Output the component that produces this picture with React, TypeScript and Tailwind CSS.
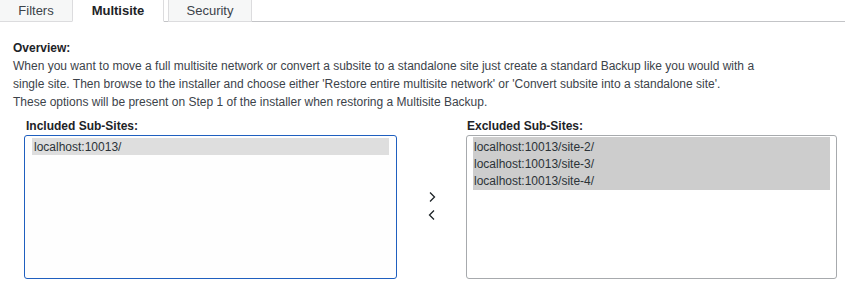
const included = ["localhost:10013/"];
const excluded = ["localhost:10013/site-2/", "localhost:10013/site-3/", "localhost:10013/site-4/"];

function Tab({ label, active, className }: { label: string; active?: boolean; className?: string }) {
  return (
    <div
      className={
        "h-[22px] -mb-px flex items-center justify-center border border-t-0 border-[#dcdcde] text-[13px] " +
        (active ? "bg-white border-b-white font-bold text-[#1d2327]" : "bg-[#f6f7f7] text-[#3c434a]") +
        " " +
        (className ?? "")
      }
    >
      {label}
    </div>
  );
}

export default function App() {
  return (
    <div className="w-[845px] h-[290px] overflow-hidden bg-white font-['Liberation_Sans',Arial,sans-serif] text-[12px] text-[#3c434a]">
      <div className="flex border-b border-[#c3c4c7]">
        <Tab label="Filters" className="w-[74px] -ml-px" />
        <Tab label="Multisite" active className="w-[92px] -ml-px" />
        <Tab label="Security" className="w-[84px] ml-[4px]" />
      </div>

      <div className="px-[13px] pt-[17px] leading-[18px] whitespace-nowrap">
        <div className="font-bold text-[#1d2327]">Overview:</div>
        <p>
          When you want to move a full multisite network or convert a subsite to a standalone site just create a standard Backup like you would with a
          <br />
          single site. Then browse to the installer and choose either 'Restore entire multisite network' or 'Convert subsite into a standalone site'.
          <br />
          These options will be present on Step 1 of the installer when restoring a Multisite Backup.
        </p>
      </div>

      <div className="flex pl-[24px] pt-[7px]">
        <div className="w-[373px]">
          <div className="pl-[2px] font-bold text-[#1d2327] leading-[17px]">Included Sub-Sites:</div>
          <div className="h-[144px] rounded-[3px] border-[1.5px] border-[#1f5fbf] bg-[#fefefe] px-[7px] pt-[2px] text-[#2c3338]">
            {included.map((s) => (
              <div key={s} className="bg-[#dedede] px-[2px] pt-px leading-[16px]">
                {s}
              </div>
            ))}
          </div>
        </div>

        <div className="w-[69px] flex flex-col items-center justify-center pt-[14px] text-[#1d2327]">
          <svg width="10" height="14" viewBox="0 0 10 14" className="mb-[4px]">
            <path d="M3 2.5 L7.5 7 L3 11.5" fill="none" stroke="currentColor" strokeWidth="1.3" />
          </svg>
          <svg width="10" height="14" viewBox="0 0 10 14">
            <path d="M7 2.5 L2.5 7 L7 11.5" fill="none" stroke="currentColor" strokeWidth="1.3" />
          </svg>
        </div>

        <div className="w-[371px]">
          <div className="pl-[1px] font-bold text-[#1d2327] leading-[17px]">Excluded Sub-Sites:</div>
          <div className="h-[144px] rounded-[3px] border border-[#a7aaad] bg-white px-[6px] pt-[1px] text-[#2c3338]">
            <div className="bg-[#cdcdcd] pt-[2px]">
              {excluded.map((s) => (
                <div key={s} className="px-[1px] leading-[17px]">
                  {s}
                </div>
              ))}
            </div>
          </div>
        </div>
      </div>
    </div>
  );
}
